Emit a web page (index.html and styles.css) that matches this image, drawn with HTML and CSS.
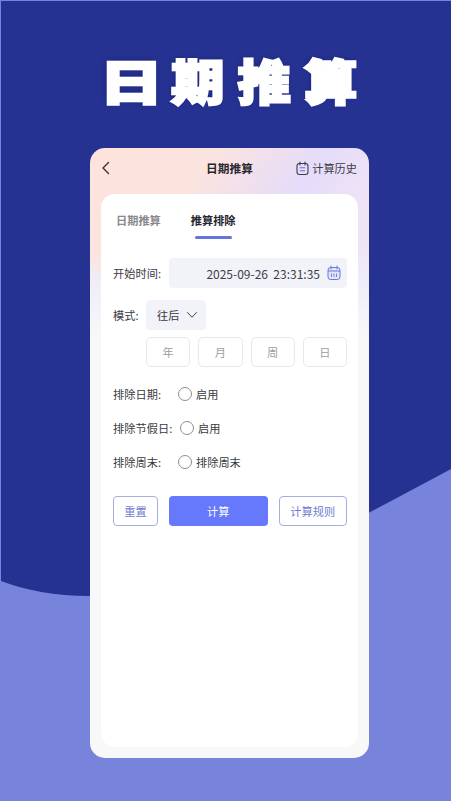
FILE: index.html
```html
<!DOCTYPE html>
<html lang="zh-CN">
<head>
<meta charset="utf-8">
<title>日期推算</title>
<link rel="stylesheet" href="styles.css">
</head>
<body>
<div class="screen">
  <svg class="backdrop" viewBox="0 0 451 801" preserveAspectRatio="none" aria-hidden="true">
    <rect width="451" height="801" fill="#7884db"/>
    <path d="M1 1H451V469C400 496 340 530 270 560C200 588 140 596 90 596C55 596 25 590 1 581Z" fill="#253291"/>
  </svg>
  <h1 class="headline"><span class="wide">日</span><span>期</span><span>推</span><span>算</span></h1>
  <main class="card">
    <header class="topbar">
      <svg class="back" viewBox="0 0 10 14" aria-hidden="true"><path d="M7.5 1.5 2 7l5.5 5.5" fill="none" stroke="#333" stroke-width="1.4" stroke-linecap="round" stroke-linejoin="round"/></svg>
      <div class="page-title">日期推算</div>
      <div class="history">
        <svg viewBox="0 0 13 15" aria-hidden="true"><rect x="1" y="2.5" width="11" height="11" rx="2.4" fill="none" stroke="#3d3d48" stroke-width="1.1"/><path d="M4 1v3M9 1v3" stroke="#3d3d48" stroke-width="1.1" stroke-linecap="round"/><path d="M4.3 6.8h4.4M4.3 9.8h4.4" stroke="#5d6de8" stroke-width="1.1" stroke-linecap="round"/></svg>
        <span>计算历史</span>
      </div>
    </header>
    <section class="panel">
      <nav class="tabs">
        <div class="tab">日期推算</div>
        <div class="tab tab-active">推算排除</div>
      </nav>
      <div class="row row-time">
        <label class="label">开始时间:</label>
        <div class="time-field">
          <span class="time-text">2025-09-26&nbsp;&nbsp;23:31:35</span>
          <svg viewBox="0 0 14 16" aria-hidden="true"><rect x="1" y="2.5" width="12" height="12" rx="2.6" fill="#e3e5f8" stroke="#6b78d8" stroke-width="1"/><path d="M1 6h12" stroke="#6b78d8" stroke-width="1"/><path d="M4 1v3M10 1v3" stroke="#6b78d8" stroke-width="1" stroke-linecap="round"/><path d="M4.5 8.5v3.5M7 8.5v3.5M9.5 8.5v3.5" stroke="#6b78d8" stroke-width=".9"/></svg>
        </div>
      </div>
      <div class="row row-mode">
        <label class="label label-short">模式:</label>
        <div class="select"><span>往后</span>
          <svg viewBox="0 0 12 8" aria-hidden="true"><path d="M1.5 1.5 6 6.2l4.5-4.7" fill="none" stroke="#444" stroke-width="1" stroke-linecap="round" stroke-linejoin="round"/></svg>
        </div>
      </div>
      <div class="units">
        <div class="unit">年</div><div class="unit">月</div><div class="unit">周</div><div class="unit">日</div>
      </div>
      <div class="row row-radio">
        <label class="label">排除日期:</label>
        <span class="radio"></span><span class="radio-text">启用</span>
      </div>
      <div class="row row-radio">
        <label class="label label-wide">排除节假日:</label>
        <span class="radio"></span><span class="radio-text">启用</span>
      </div>
      <div class="row row-radio">
        <label class="label">排除周末:</label>
        <span class="radio"></span><span class="radio-text">排除周末</span>
      </div>
      <div class="actions">
        <button class="btn btn-reset">重置</button>
        <button class="btn btn-primary">计算</button>
        <button class="btn btn-rules">计算规则</button>
      </div>
    </section>
  </main>
</div>
</body>
</html>
```
FILE: styles.css
```css
* { box-sizing: border-box; }
html, body { margin: 0; padding: 0; }
body {
  width: 451px;
  height: 801px;
  overflow: hidden;
  background: #aab2ea;
  font-family: "Noto Sans CJK SC", "Noto Sans", sans-serif;
  color: #3a3a40;
}
.screen {
  position: relative;
  width: 451px;
  height: 801px;
  overflow: hidden;
  padding-top: 48px;
}
.backdrop {
  position: absolute;
  inset: 0;
  width: 100%;
  height: 100%;
}
.headline {
  position: relative;
  margin: 0 0 0 98px;
  height: 62px;
  display: flex;
  font-size: 53px;
  line-height: 62px;
  font-weight: 900;
  color: #fff;
  -webkit-text-stroke: 2.8px #fff;
  text-shadow: -1px -1px 6px rgba(10, 16, 80, .45);
}
.headline span { display: block; width: 66.5px; text-align: center; transform: scaleY(.9); }
.headline .wide { transform: scale(1.2, .9); }
.card {
  position: relative;
  margin: 38px 0 0 90px;
  width: 279px;
  height: 610px;
  border-radius: 15px;
  background:
    linear-gradient(to bottom, rgba(248, 248, 249, 0) 0, rgba(248, 248, 249, 0) 105px, rgba(238, 238, 250, .9) 135px, #f8f8f9 190px) top / 100% 190px no-repeat,
    linear-gradient(125deg, #fde3dc 0%, #fce4de 30%, #e5dcfb 58%, #f0e4f4 78%, #ece6f8 100%) top / 100% 190px no-repeat,
    #f8f8f9;
  padding: 0 11px 11px;
}
.topbar {
  height: 46px;
  display: flex;
  align-items: center;
  position: relative;
  padding-top: 1px;
}
.back { width: 10px; height: 14px; flex: none; margin-top: -7px; }
.page-title {
  position: absolute;
  left: 0;
  right: 0;
  top: 0;
  line-height: 39px;
  text-align: center;
  font-size: 11.7px;
  font-weight: 700;
  color: #26262c;
  pointer-events: none;
}
.history {
  margin-left: auto;
  margin-right: 1px;
  display: flex;
  align-items: center;
  gap: 3px;
  margin-top: -8px;
  font-size: 11.2px;
  color: #3d3d45;
}
.history svg { width: 13px; height: 15px; margin-top: 1px; }
.panel {
  height: 553px;
  border-radius: 14px;
  background: #fff;
  padding: 0 11px 0 12px;
}
.tabs {
  height: 45px;
  display: flex;
  padding-left: 3px;
  gap: 30px;
}
.tab {
  position: relative;
  padding-top: 16px;
  font-size: 11.2px;
  line-height: 20px;
  font-weight: 700;
  color: #8a8a8e;
}
.tab-active { color: #26262c; }
.tab-active::after {
  content: "";
  position: absolute;
  left: 4px;
  width: 37px;
  top: 42px;
  height: 3px;
  border-radius: 2px;
  background: #6176df;
}
.row { display: flex; align-items: center; }
.row-time { margin-top: 19px; height: 30px; }
.label { font-size: 11.2px; color: #3a3a40; width: 56px; flex: none; white-space: nowrap; letter-spacing: .05px; }
.time-field {
  width: 178px;
  height: 30px;
  border-radius: 4px;
  background: #f2f2f9;
  display: flex;
  align-items: center;
  justify-content: flex-end;
  padding-right: 6px;
  gap: 7px;
  font-size: 12px;
  color: #3d3d44;
}
.time-field svg { width: 14px; height: 16px; }
.row-mode { margin-top: 12px; height: 30px; }
.label-short { width: 33px; padding-bottom: 1px; }
.select {
  width: 60px;
  height: 30px;
  border-radius: 4px;
  background: #f2f2f9;
  display: flex;
  align-items: center;
  padding: 0 0 1px 11px;
  gap: 6.5px;
  font-size: 11.2px;
}
.select svg { width: 12px; height: 8px; }
.units {
  margin: 7px 0 0 33px;
  display: grid;
  grid-template-columns: repeat(4, 1fr);
  gap: 8px;
}
.unit {
  height: 30px;
  border: 1px solid #e9e9ec;
  border-radius: 5px;
  font-size: 11.2px;
  line-height: 28px;
  text-align: center;
  color: #9d9da2;
}
.row-radio { height: 20px; margin-top: 14px; }
.units + .row-radio { margin-top: 17px; }
.radio {
  width: 14px;
  height: 14px;
  border: 1px solid #8e8e92;
  border-radius: 50%;
  margin-left: 9px;
  flex: none;
}
.label-wide { width: 58px; }
.radio-text { margin-left: 4px; font-size: 11.2px; color: #3a3a40; }
.actions {
  margin-top: 24px;
  display: flex;
  justify-content: space-between;
}
.btn {
  height: 30px;
  border-radius: 4px;
  font-family: inherit;
  font-size: 11.2px;
  padding: 0;
}
.btn-reset, .btn-rules {
  background: #fff;
  border: 1px solid #a6aedd;
  color: #6f7cd0;
}
.btn-reset { width: 45px; }
.btn-primary { width: 99px; border: 0; background: #6678fb; color: #fff; }
.btn-rules { width: 68.5px; }
```
